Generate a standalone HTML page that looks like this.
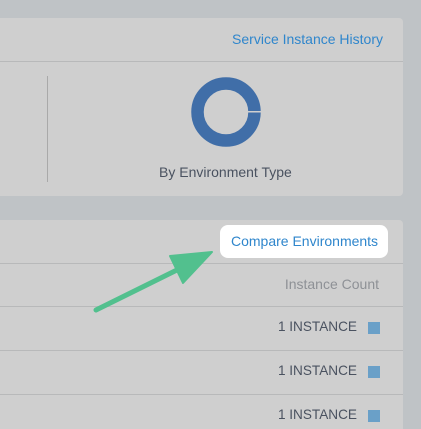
<!DOCTYPE html>
<html><head><style>
html,body{margin:0;width:421px;height:429px;overflow:hidden;}
body{background:#bfc3c6;position:relative;font-family:"Liberation Sans",sans-serif;}
.card{position:absolute;left:0;width:403px;background:#cfcfcf;border-radius:0 4px 4px 0;}
.t{position:absolute;font-size:14px;white-space:nowrap;}
.i{font-size:13.6px;}
.line{position:absolute;left:0;width:403px;height:1px;background:#b8b9ba;}
.sq{position:absolute;left:368px;width:12px;height:12px;background:#6aa0c8;}
</style></head><body>
<div class="card" style="top:18px;height:178px;"></div>
<div class="t" style="right:38px;top:31px;color:#2f86cc;">Service Instance History</div>
<div class="line" style="top:61px;"></div>
<div style="position:absolute;left:47px;top:76px;width:1px;height:106px;background:#a9a9a9;"></div>
<svg style="position:absolute;left:190px;top:76px" width="72" height="72"><circle cx="36" cy="36" r="28.5" fill="none" stroke="#406ea8" stroke-width="12.5"/><rect x="58" y="35" width="14" height="1.5" fill="#cfcfcf"/></svg>
<div class="t" style="left:159px;top:164px;color:#4a5260;">By Environment Type</div>

<div class="card" style="top:220px;height:209px;border-radius:0 4px 0 0;"></div>
<div style="position:absolute;left:220px;top:225px;width:168px;height:33px;background:#fff;border-radius:8px;"></div>
<div class="t" style="left:231px;top:233px;color:#2f86cc;">Compare Environments</div>
<div class="line" style="top:263px;"></div>
<div class="t" style="right:42px;top:276px;color:#8e9196;">Instance Count</div>
<div class="line" style="top:306px;"></div>
<div class="t i" style="right:64px;top:319px;color:#4a5260;">1 INSTANCE</div><div class="sq" style="top:322px"></div>
<div class="line" style="top:350px;"></div>
<div class="t i" style="right:64px;top:363px;color:#4a5260;">1 INSTANCE</div><div class="sq" style="top:366px"></div>
<div class="line" style="top:394px;"></div>
<div class="t i" style="right:64px;top:407px;color:#4a5260;">1 INSTANCE</div><div class="sq" style="top:410px"></div>

<svg style="position:absolute;left:0;top:0" width="421" height="429">
<line x1="96" y1="310" x2="185" y2="266" stroke="#52c08e" stroke-width="5" stroke-linecap="round"/>
<polygon points="170,256 212,252 183,283" fill="#52c08e" stroke="#52c08e" stroke-width="2" stroke-linejoin="round"/>
</svg>
</body></html>
